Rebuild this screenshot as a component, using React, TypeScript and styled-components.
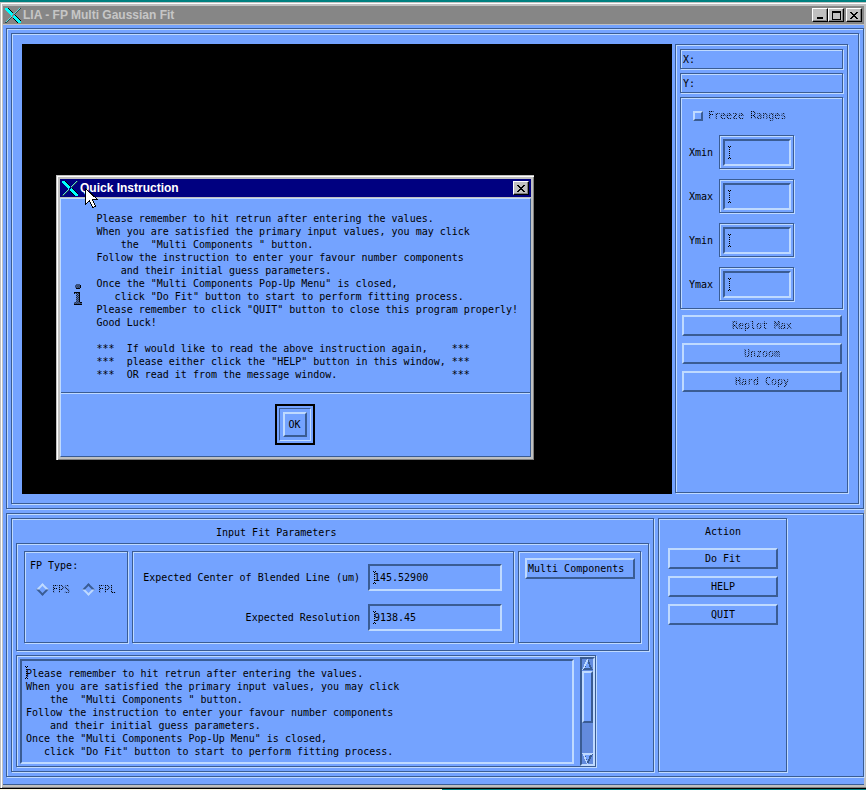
import React from "react";
import styled, { createGlobalStyle, css } from "styled-components";

const face = "#74a3ff";
const dark = "#3a5c93";
const light = "#bfdaff";
const trough = "#638bdd";
const silver = "#c0c0c0";

const Global = createGlobalStyle`
  *, *::before, *::after { box-sizing: border-box; }
  body { margin: 0; background: #008080; }
  body, button, input, textarea {
    font-family: "DejaVu Sans Mono", "Liberation Mono", monospace;
    font-size: 10px;
    line-height: 13px;
    color: #000;
  }
`;

const Desktop = styled.div`
  position: relative;
  padding-top: 2px;
`;

const AppWindow = styled.div`
  background: ${silver};
  padding: 4px 2px 3px 3px;
  box-shadow: inset 1px 1px 0 ${silver}, inset 2px 2px 0 #fff, inset 0 -1px 0 #808080;
`;

const TitleBar = styled.header<{ $active?: boolean }>`
  display: flex;
  align-items: center;
  height: 18px;
  margin-bottom: 1px;
  padding: 0 2px;
  background: ${(p) => (p.$active ? "#000080" : "#868686")};
  color: ${(p) => (p.$active ? "#fff" : "#c6c6c6")};
`;

const TitleText = styled.h1`
  flex: 1;
  margin: 0 0 0 2px;
  font: bold 12px/18px "Liberation Sans", Arial, sans-serif;
  white-space: nowrap;
`;

const CaptionButton = styled.button<{ $spaced?: boolean }>`
  width: 16px;
  height: 14px;
  padding: 0;
  margin-left: ${(p) => (p.$spaced ? "2px" : "0")};
  display: grid;
  place-items: center;
  background: ${silver};
  border: 1px solid;
  border-color: #fff #000 #000 #fff;
  box-shadow: inset -1px -1px 0 #808080;
`;

const Client = styled.main`
  display: flex;
  flex-direction: column;
  gap: 4px;
  padding: 3px 0 7px 3px;
  background: ${face};
  border-bottom: 1px solid ${dark};
`;

const etched = css`
  border: 1px solid ${dark};
  box-shadow: 1px 1px 0 ${light}, inset 1px 1px 0 ${light};
`;

const Panel = styled.section`
  ${etched}
  padding: 4px;
`;

const PlotPanel = styled(Panel)`
  display: flex;
  align-items: stretch;
  gap: 3px;
  padding: 10px 10px 9px;
`;

const PlotCanvas = styled.div`
  flex: 1;
  min-width: 0;
  min-height: 450px;
  background: #000;
`;

const SidePanel = styled(Panel)`
  display: flex;
  flex-direction: column;
  gap: 4px;
  width: 173px;
  margin-bottom: 1px;
`;

const Readout = styled.div`
  ${etched}
  height: 20px;
  padding: 3px 2px;
`;

const Ranges = styled.div`
  ${etched}
  display: flex;
  flex-direction: column;
  gap: 10px;
  padding: 11px 8px 7px;
`;

const stipple = css`
  color: transparent;
  background: repeating-conic-gradient(#000 0 25%, #5c85d6 0 50%) 0 0 / 2px 2px;
  background-clip: text;
  -webkit-background-clip: text;
`;

const Dim = styled.span`
  ${stipple}
`;

const CheckLabel = styled.label`
  display: flex;
  align-items: center;
  gap: 5px;
  margin: 0 0 3px 4px;
`;

const CheckBox = styled.input`
  appearance: none;
  width: 10px;
  height: 10px;
  margin: 0;
  border: 2px solid;
  border-color: ${light} ${dark} ${dark} ${light};
`;

const RangeRow = styled.div`
  display: flex;
  align-items: center;
`;

const RangeLabel = styled.label`
  width: 30px;
`;

const FieldFrame = styled.div`
  ${etched}
  width: 75px;
  padding: 3px 2px 2px 3px;
`;

const sunken = css`
  border: 2px solid;
  border-color: ${dark} ${light} ${light} ${dark};
`;

const raised = css`
  border: 2px solid;
  border-color: ${light} ${dark} ${dark} ${light};
`;

const FieldWrap = styled.div`
  position: relative;
  display: flex;
`;

const Field = styled.input`
  ${sunken}
  width: 100%;
  height: 27px;
  padding: 0 4px;
  background: ${face};
  border-radius: 0;
  outline: none;
`;

const CaretMark = styled.svg<{ $top?: number }>`
  position: absolute;
  left: 5px;
  top: ${(p) => p.$top ?? 7}px;
  pointer-events: none;
`;

const PushButton = styled.button`
  ${raised}
  width: 100%;
  height: 21px;
  padding: 0 1px;
  background: ${face};
  border-radius: 0;
  white-space: nowrap;
`;

const ButtonStack = styled.div`
  display: flex;
  flex-direction: column;
  gap: 7px;
  padding: 2px 1px 0 2px;
`;

const LowerPanel = styled(Panel)`
  display: grid;
  grid-template-columns: minmax(0, 1fr) 129px;
  gap: 4px;
  padding-right: 76px;
`;

const InputPanel = styled(Panel)`
  display: flex;
  flex-direction: column;
  gap: 4px;
  padding-top: 0;
`;

const Heading = styled.h2`
  margin: 0;
  padding: 7px 0 0 200px;
  font: inherit;
`;

const ParamFrame = styled.div`
  ${etched}
  display: flex;
  gap: 4px;
  padding: 7px;
`;

const TypeBox = styled.fieldset`
  ${etched}
  width: 104px;
  margin: 0;
  padding: 7px 5px;
`;

const RadioRow = styled.div`
  display: flex;
  gap: 14px;
  padding: 11px 0 0 8px;
`;

const RadioLabel = styled.label`
  display: flex;
  align-items: center;
  gap: 5px;
`;

const Diamond = styled.input`
  appearance: none;
  width: 9px;
  height: 9px;
  margin: 0;
  transform: rotate(45deg);
  ${raised}
  &:checked { ${sunken} }
`;

const ValueBox = styled.div`
  ${etched}
  flex: 1;
  display: grid;
  grid-template-columns: 1fr 134px;
  align-items: center;
  gap: 13px 8px;
  padding: 12px 11px 11px 4px;
`;

const ValueLabel = styled.label`
  justify-self: end;
  white-space: nowrap;
`;

const MultiBox = styled.div`
  ${etched}
  width: 123px;
  padding: 6px 5px 6px 6px;
`;

const MultiButton = styled(PushButton)`
  text-align: left;
`;

const MessageFrame = styled.div`
  ${etched}
  display: flex;
  gap: 6px;
  margin-right: 53px;
  padding: 1px 0 0 3px;
`;

const MessageWrap = styled.div`
  position: relative;
  display: flex;
  flex: 1;
  padding: 2px 0;
`;

const MessageArea = styled.textarea`
  ${sunken}
  width: 100%;
  height: 105px;
  padding: 6px 4px;
  background: ${face};
  border-radius: 0;
  overflow: hidden;
  resize: none;
  outline: none;
  white-space: pre;
`;

const ScrollBar = styled.div`
  ${sunken}
  display: flex;
  flex-direction: column;
  width: 15px;
  background: ${trough};
`;

const ArrowButton = styled.button`
  display: block;
  height: 11px;
  padding: 0;
  border: 0;
  background: none;
  line-height: 0;
`;

const ScrollTrack = styled.div`
  flex: 1;
  padding: 1px 0;
`;

const Thumb = styled.div`
  ${raised}
  height: 64%;
  background: ${face};
`;

const ActionPanel = styled(Panel)`
  display: flex;
  flex-direction: column;
  gap: 7px;
  padding: 6px 8px 8px 9px;
`;

const ActionTitle = styled.h2`
  margin: 0 0 3px;
  font: inherit;
  text-align: center;
`;

const BottomEdge = styled.div`
  height: 2px;
  border-top: 1px solid #000;
  background: linear-gradient(90deg, #fffbe8 0 51%, #008080 51%);
`;

const Dialog = styled.div`
  position: absolute;
  left: 56px;
  top: 175px;
  width: 478px;
  padding: 4px 3px 3px 4px;
  background: ${silver};
  box-shadow: inset 1px 1px 0 ${silver}, inset 2px 2px 0 #fff, inset -1px -1px 0 #808080;
`;

const DialogBody = styled.div`
  background: ${face};
  border: 1px solid;
  border-color: ${light} ${dark} ${dark} ${light};
`;

const DialogMessage = styled.div`
  display: flex;
  align-items: center;
  gap: 14px;
  padding: 13px 12px 11px;
  border-bottom: 1px solid ${dark};
`;

const DialogText = styled.p`
  margin: 0;
  white-space: pre;
`;

const DialogFooter = styled.div`
  display: flex;
  justify-content: center;
  padding: 10px 2px 11px 0;
  border-top: 1px solid ${light};
`;

const DefaultRing = styled.div`
  padding: 2px;
  border: 2px solid #000;
`;

const DefaultInset = styled.div`
  padding: 3px;
  border: 1px solid;
  border-color: ${dark} ${light} ${light} ${dark};
`;

const OkButton = styled.button`
  ${raised}
  display: block;
  width: 24px;
  height: 25px;
  padding: 0;
  background: ${face};
  border-radius: 0;
`;

const Pointer = styled.svg`
  position: absolute;
  left: 85px;
  top: 188px;
`;

const XLogo = () => (
  <svg width="16" height="15" viewBox="0 0 16 15" shapeRendering="crispEdges" aria-hidden="true">
    <path d="M15.500 0L9 6.500M6.500 9L.5 15" stroke="#2a4a4a" strokeWidth="2" />
    <path d="M0 0h3l5 5v2L6 8 0 2z" fill="#00ffff" />
    <path d="M8 8l2-1 6 6v2h-3l-5-5z" fill="#00ffff" />
    <path d="M3 0l5 5M10 7l6 6M8 10l5 5" stroke="#000" strokeWidth="1" />
    <path d="M15 0L9 6M6.500 8.500L1 14" stroke="#5cdcdc" strokeWidth="1" />
  </svg>
);

const CloseGlyph = () => (
  <svg width="9" height="7" viewBox="0 0 9 7" shapeRendering="crispEdges" aria-hidden="true">
    <path d="M0 0h2v1h1v1h2v-1h1v-1h2v1h-1v1h-1v1h-1v1h1v1h1v1h1v1h-2v-1h-1v-1h-2v1h-1v1h-2v-1h1v-1h1v-1h1v-1h-1v-1h-1v-1h-1z" />
  </svg>
);

const Caret = ({ top }: { top?: number }) => (
  <CaretMark $top={top} width="3" height="13" viewBox="0 0 3 13" shapeRendering="crispEdges" aria-hidden="true">
    <path d="M0 .5h1M2 .5h1M0 12.5h1M2 12.5h1" stroke="#000" />
    <path d="M1.5 1v11" stroke="#000" strokeDasharray="1 1" />
  </CaretMark>
);

const Arrow = ({ down }: { down?: boolean }) => (
  <svg width="11" height="11" viewBox="0 0 11 11" shapeRendering="crispEdges" aria-hidden="true">
    {down ? (
      <>
        <path d="M0 0h11L6 11H5z" fill={dark} />
        <path d="M0 0h11v2H3l3 9H5z" fill={light} />
        <path d="M11 1L6 11 5 9 9 2z" fill={dark} />
        <path d="M3 2h5L5.5 8z" fill={face} />
      </>
    ) : (
      <>
        <path d="M5 0h1l5 11H0z" fill={dark} />
        <path d="M5 0h1v2L2.500 9 0 11z" fill={light} />
        <path d="M5.500 3L8 9H3z" fill={face} />
      </>
    )}
  </svg>
);

const InfoMark = styled.svg`
  margin-bottom: 4px;
`;

const InfoIcon = () => (
  <InfoMark width="10" height="22" viewBox="0 0 10 22" shapeRendering="crispEdges" aria-hidden="true">
    <defs>
      <pattern id="dither" width="2" height="2" patternUnits="userSpaceOnUse">
        <path d="M0 0h1v1h-1zM1 1h1v1h-1z" />
      </pattern>
    </defs>
    <path d="M3 0h4v1h1v3h-1v1h-4v-1h-1v-3h1zM1 8h6v10h2v3h-8v-3h2v-8h-2z" fill="url(#dither)" />
    <path d="M7.500 1v3M3 4.500h4M6.500 8v10M7 18.500h2M1 20.500h8M1 8.500h5" fill="none" stroke="#000" />
  </InfoMark>
);

const intro = [
  "Please remember to hit retrun after entering the values.",
  "When you are satisfied the primary input values, you may click",
  "    the  \"Multi Components \" button.",
  "Follow the instruction to enter your favour number components",
  "    and their initial guess parameters.",
  "Once the \"Multi Components Pop-Up Menu\" is closed,",
  "   click \"Do Fit\" button to start to perform fitting process.",
];

const instructions = [
  ...intro,
  "Please remember to click \"QUIT\" button to close this program properly!",
  "Good Luck!",
  "",
  "***  If would like to read the above instruction again,    ***",
  "***  please either click the \"HELP\" button in this window, ***",
  "***  OR read it from the message window.                   ***",
];

const axes = ["Xmin", "Xmax", "Ymin", "Ymax"];
const plotActions = ["Replot Max", "Unzoom", "Hard Copy"];
const fitActions = ["Do Fit", "HELP", "QUIT"];
const values = [
  { id: "center", label: "Expected Center of Blended Line (um)", value: "145.52900" },
  { id: "resolution", label: "Expected Resolution", value: "9138.45" },
];

export default function App() {
  return (
    <Desktop>
      <Global />
      <AppWindow>
        <TitleBar>
          <XLogo />
          <TitleText>LIA - FP Multi Gaussian Fit</TitleText>
          <CaptionButton aria-label="Minimize">
            <svg width="9" height="8" shapeRendering="crispEdges"><path d="M1 6h6v2h-6z" /></svg>
          </CaptionButton>
          <CaptionButton aria-label="Maximize">
            <svg width="9" height="9" shapeRendering="crispEdges"><path d="M0 0h9v9h-9zM1 2v6h7v-6z" fillRule="evenodd" /></svg>
          </CaptionButton>
          <CaptionButton $spaced aria-label="Close"><CloseGlyph /></CaptionButton>
        </TitleBar>
        <Client>
          <Panel>
            <PlotPanel>
              <PlotCanvas />
              <SidePanel>
                <Readout>X:</Readout>
                <Readout>Y:</Readout>
                <Ranges>
                  <CheckLabel>
                    <CheckBox type="checkbox" disabled />
                    <Dim>Freeze Ranges</Dim>
                  </CheckLabel>
                  {axes.map((axis) => (
                    <RangeRow key={axis}>
                      <RangeLabel htmlFor={axis}>{axis}</RangeLabel>
                      <FieldFrame>
                        <FieldWrap>
                          <Field id={axis} type="text" />
                          <Caret />
                        </FieldWrap>
                      </FieldFrame>
                    </RangeRow>
                  ))}
                </Ranges>
                <ButtonStack>
                  {plotActions.map((name) => (
                    <PushButton key={name} disabled><Dim>{name}</Dim></PushButton>
                  ))}
                </ButtonStack>
              </SidePanel>
            </PlotPanel>
          </Panel>
          <LowerPanel>
            <InputPanel>
              <Heading>Input Fit Parameters</Heading>
              <ParamFrame>
                <TypeBox aria-label="FP Type">
                  <div>FP Type:</div>
                  <RadioRow>
                    <RadioLabel>
                      <Diamond type="radio" name="fp" disabled />
                      <Dim>FPS</Dim>
                    </RadioLabel>
                    <RadioLabel>
                      <Diamond type="radio" name="fp" disabled defaultChecked />
                      <Dim>FPL</Dim>
                    </RadioLabel>
                  </RadioRow>
                </TypeBox>
                <ValueBox>
                  {values.map((v) => (
                    <React.Fragment key={v.id}>
                      <ValueLabel htmlFor={v.id}>{v.label}</ValueLabel>
                      <FieldWrap>
                        <Field id={v.id} type="text" defaultValue={v.value} />
                        <Caret />
                      </FieldWrap>
                    </React.Fragment>
                  ))}
                </ValueBox>
                <MultiBox>
                  <MultiButton>Multi Components</MultiButton>
                </MultiBox>
              </ParamFrame>
              <MessageFrame>
                <MessageWrap>
                  <MessageArea aria-label="Messages" readOnly value={intro.join("\n")} />
                  <Caret top={9} />
                </MessageWrap>
                <ScrollBar>
                  <ArrowButton aria-label="Scroll up"><Arrow /></ArrowButton>
                  <ScrollTrack><Thumb /></ScrollTrack>
                  <ArrowButton aria-label="Scroll down"><Arrow down /></ArrowButton>
                </ScrollBar>
              </MessageFrame>
            </InputPanel>
            <ActionPanel>
              <ActionTitle>Action</ActionTitle>
              {fitActions.map((name) => (
                <PushButton key={name}>{name}</PushButton>
              ))}
            </ActionPanel>
          </LowerPanel>
        </Client>
      </AppWindow>
      <BottomEdge />

      <Dialog role="dialog" aria-label="Quick Instruction">
        <TitleBar $active>
          <XLogo />
          <TitleText>Quick Instruction</TitleText>
          <CaptionButton aria-label="Close dialog"><CloseGlyph /></CaptionButton>
        </TitleBar>
        <DialogBody>
          <DialogMessage>
            <InfoIcon />
            <DialogText>{instructions.join("\n")}</DialogText>
          </DialogMessage>
          <DialogFooter>
            <DefaultRing>
              <DefaultInset>
                <OkButton>OK</OkButton>
              </DefaultInset>
            </DefaultRing>
          </DialogFooter>
        </DialogBody>
      </Dialog>

      <Pointer width="13" height="22" viewBox="0 0 13 22" shapeRendering="crispEdges" aria-hidden="true">
        <path d="M.5.5v16l4-4 3 7 3-1-3-7h5z" fill="#fff" stroke="#000" />
      </Pointer>
    </Desktop>
  );
}
